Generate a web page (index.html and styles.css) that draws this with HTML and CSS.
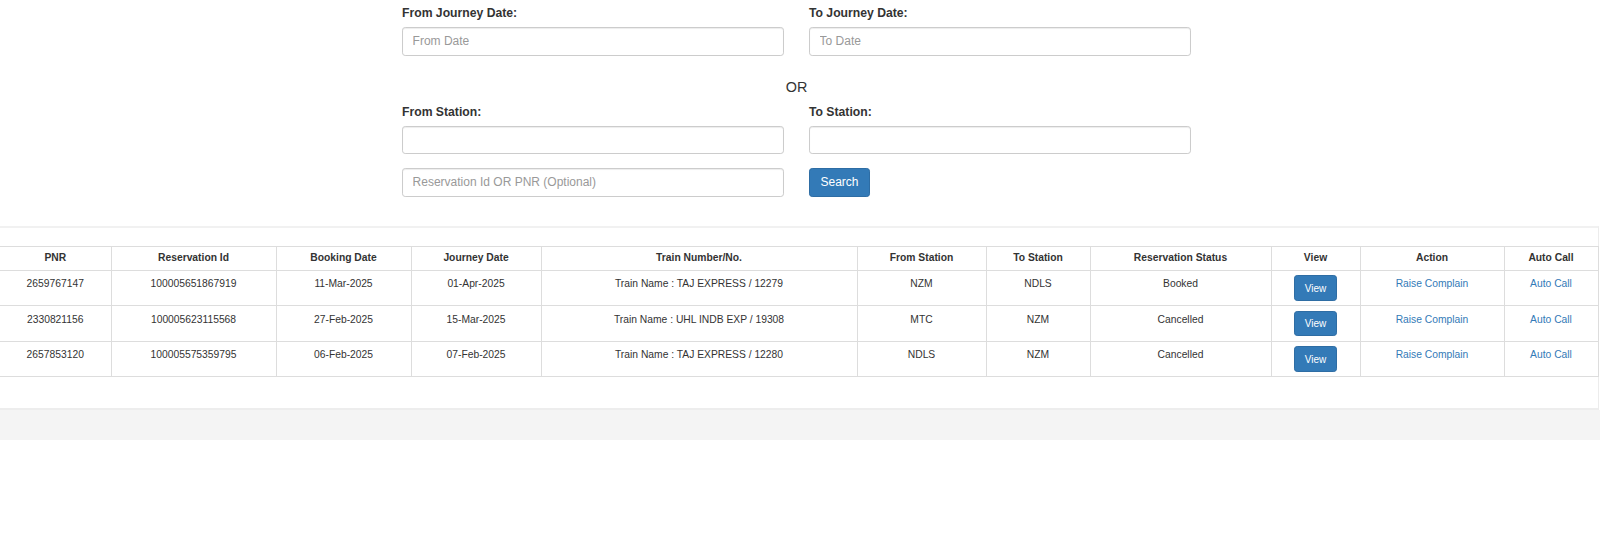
FILE: index.html
```html
<!DOCTYPE html>
<html lang="en">
<head>
<meta charset="utf-8">
<title>Reservations</title>
<link rel="stylesheet" href="styles.css">
</head>
<body>
<form class="search">
  <div class="grid">
    <div class="field">
      <label class="lbl">From Journey Date:</label>
      <input class="ctl" type="text" placeholder="From Date">
    </div>
    <div class="field">
      <label class="lbl">To Journey Date:</label>
      <input class="ctl" type="text" placeholder="To Date">
    </div>
  </div>
  <div class="or">OR</div>
  <div class="grid grid-station">
    <div class="field">
      <label class="lbl">From Station:</label>
      <input class="ctl" type="text">
    </div>
    <div class="field">
      <label class="lbl">To Station:</label>
      <input class="ctl" type="text">
    </div>
  </div>
  <div class="grid grid-last">
    <div class="field">
      <input class="ctl" type="text" placeholder="Reservation Id OR PNR (Optional)">
    </div>
    <div class="field">
      <button class="btn btn-search" type="button">Search</button>
    </div>
  </div>
</form>

<div class="panel">
  <table class="grid-table">
    <colgroup>
      <col class="c-pnr"><col class="c-rid"><col class="c-bd"><col class="c-jd"><col class="c-train"><col class="c-from"><col class="c-to"><col class="c-status"><col class="c-view"><col class="c-action"><col class="c-auto">
    </colgroup>
    <thead>
      <tr>
        <th>PNR</th><th>Reservation Id</th><th>Booking Date</th><th>Journey Date</th><th>Train Number/No.</th><th>From Station</th><th>To Station</th><th>Reservation Status</th><th>View</th><th>Action</th><th>Auto Call</th>
      </tr>
    </thead>
    <tbody>
      <tr>
        <td>2659767147</td><td>100005651867919</td><td>11-Mar-2025</td><td>01-Apr-2025</td><td>Train Name : TAJ EXPRESS / 12279</td><td>NZM</td><td>NDLS</td><td>Booked</td><td><button class="btn btn-view" type="button">View</button></td><td><a class="lnk" href="#">Raise Complain</a></td><td><a class="lnk" href="#">Auto Call</a></td>
      </tr>
      <tr>
        <td>2330821156</td><td>100005623115568</td><td>27-Feb-2025</td><td>15-Mar-2025</td><td>Train Name : UHL INDB EXP / 19308</td><td>MTC</td><td>NZM</td><td>Cancelled</td><td><button class="btn btn-view" type="button">View</button></td><td><a class="lnk" href="#">Raise Complain</a></td><td><a class="lnk" href="#">Auto Call</a></td>
      </tr>
      <tr>
        <td>2657853120</td><td>100005575359795</td><td>06-Feb-2025</td><td>07-Feb-2025</td><td>Train Name : TAJ EXPRESS / 12280</td><td>NDLS</td><td>NZM</td><td>Cancelled</td><td><button class="btn btn-view" type="button">View</button></td><td><a class="lnk" href="#">Raise Complain</a></td><td><a class="lnk" href="#">Auto Call</a></td>
      </tr>
    </tbody>
  </table>
</div>
<div class="band"></div>
</body>
</html>
```

FILE: styles.css
```css
html, body {
  margin: 0;
  padding: 0;
  background: #fff;
}
body {
  font-family: "Liberation Sans", Arial, Helvetica, sans-serif;
  color: #333;
}

/* search form */
.search {
  width: 789px;
  margin: 0 0 0 402px;
  padding-top: 5.4px;
}
.grid {
  display: grid;
  grid-template-columns: 382px 382px;
  column-gap: 25px;
}
.grid-station { margin-top: 6.1px; }
.grid-last { margin-top: 14px; }
.lbl {
  display: block;
  font-weight: bold;
  font-size: 12.2px;
  line-height: 17.1px;
  margin-bottom: 4.8px;
}
.ctl {
  display: block;
  box-sizing: border-box;
  width: 100%;
  height: 28.4px;
  margin: 0;
  padding: 0 9.6px;
  border: 1px solid #ccc;
  border-radius: 3.2px;
  box-shadow: inset 0 1px 1px rgba(0, 0, 0, 0.075);
  font-family: "Liberation Sans", Arial, Helvetica, sans-serif;
  font-size: 12px;
  color: #555;
  background: #fff;
}
.ctl::placeholder { color: #999; }
.or {
  text-align: center;
  font-size: 14.4px;
  line-height: 20.6px;
  margin-top: 21.6px;
}
.btn {
  display: inline-block;
  box-sizing: border-box;
  margin: 0;
  background: #337ab7;
  border: 1px solid #2e6da4;
  border-radius: 3.2px;
  color: #fff;
  font-family: "Liberation Sans", Arial, Helvetica, sans-serif;
  cursor: pointer;
}
.btn-search {
  height: 28.4px;
  padding: 0 10.5px;
  font-size: 12px;
}
.btn-view {
  height: 25.5px;
  padding: 0 9.4px;
  font-size: 10px;
  vertical-align: top;
}

/* result panel */
.panel {
  margin-top: 29.8px;
  width: 1598px;
  border-top: 2px solid #f1f1f1;
  border-right: 1px solid #ececec;
  border-bottom: 2px solid #ededed;
  padding: 17.5px 0 31px;
  background: #fff;
}
.grid-table {
  width: 1598px;
  table-layout: fixed;
  border-collapse: collapse;
  font-size: 10.3px;
  line-height: 14px;
  color: #333;
}
.grid-table th,
.grid-table td {
  border: 1px solid #ddd;
  padding: 4.5px 4px;
  text-align: center;
  vertical-align: top;
}
.grid-table th { font-weight: bold; }
.grid-table td { line-height: 17.4px; }
.grid-table th:first-child,
.grid-table td:first-child { border-left: 0; }

.c-pnr { width: 111px; }
.c-rid { width: 165px; }
.c-bd { width: 135px; }
.c-jd { width: 130px; }
.c-train { width: 316px; }
.c-from { width: 129px; }
.c-to { width: 104px; }
.c-status { width: 181px; }
.c-view { width: 89px; }
.c-action { width: 144px; }
.c-auto { width: 94px; }

.lnk {
  color: #337ab7;
  text-decoration: none;
}

.band {
  height: 30px;
  background: #f4f4f4;
}
```
